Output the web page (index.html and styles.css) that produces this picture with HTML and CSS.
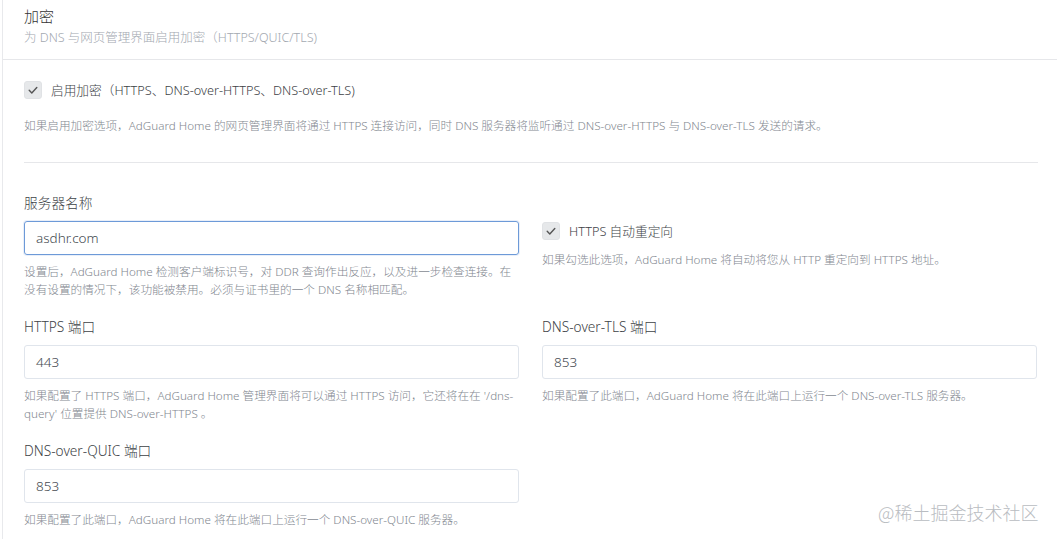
FILE: index.html
```html
<!DOCTYPE html>
<html lang="zh-CN">
<head>
<meta charset="utf-8">
<title>加密</title>
<link rel="stylesheet" href="styles.css">
</head>
<body>
<div class="page">
  <section class="card">
    <header class="card-header">
      <div class="card-title">加密</div>
      <div class="card-subtitle">为 DNS 与网页管理界面启用加密（HTTPS/QUIC/TLS)</div>
    </header>
    <div class="card-body">
      <label class="check">
        <span class="box"><svg viewBox="0 0 18 18" width="18" height="18"><path d="M5.2 9.3l2.6 2.6 5-5.4" fill="none" stroke="#555" stroke-width="1.4" stroke-linecap="round" stroke-linejoin="round"/></svg></span>
        <span class="check-label">启用加密（HTTPS、DNS-over-HTTPS、DNS-over-TLS)</span>
      </label>
      <p class="help help-top">如果启用加密选项，AdGuard Home 的网页管理界面将通过 HTTPS 连接访问，同时 DNS 服务器将监听通过 DNS-over-HTTPS 与 DNS-over-TLS 发送的请求。</p>
      <hr class="divider">
      <div class="grid">
        <div class="field">
          <div class="label">服务器名称</div>
          <div class="input focused">asdhr.com</div>
          <p class="help">设置后，AdGuard Home 检测客户端标识号，对 DDR 查询作出反应，以及进一步检查连接。在没有设置的情况下，该功能被禁用。必须与证书里的一个 DNS 名称相匹配。</p>
        </div>
        <div class="field field-check">
          <label class="check">
            <span class="box"><svg viewBox="0 0 18 18" width="18" height="18"><path d="M5.2 9.3l2.6 2.6 5-5.4" fill="none" stroke="#555" stroke-width="1.4" stroke-linecap="round" stroke-linejoin="round"/></svg></span>
            <span class="check-label">HTTPS 自动重定向</span>
          </label>
          <p class="help help-redirect">如果勾选此选项，AdGuard Home 将自动将您从 HTTP 重定向到 HTTPS 地址。</p>
        </div>
        <div class="field">
          <div class="label">HTTPS 端口</div>
          <div class="input">443</div>
          <p class="help">如果配置了 HTTPS 端口，AdGuard Home 管理界面将可以通过 HTTPS 访问，它还将在在 '/dns-query' 位置提供 DNS-over-HTTPS 。</p>
        </div>
        <div class="field">
          <div class="label">DNS-over-TLS 端口</div>
          <div class="input">853</div>
          <p class="help">如果配置了此端口，AdGuard Home 将在此端口上运行一个 DNS-over-TLS 服务器。</p>
        </div>
        <div class="field">
          <div class="label">DNS-over-QUIC 端口</div>
          <div class="input">853</div>
          <p class="help">如果配置了此端口，AdGuard Home 将在此端口上运行一个 DNS-over-QUIC 服务器。</p>
        </div>
      </div>
    </div>
  </section>
  <div class="watermark">@稀土掘金技术社区</div>
</div>
</body>
</html>
```

FILE: styles.css
```css
* { box-sizing: border-box; }
html, body {
  margin: 0;
  padding: 0;
  background: #fff;
  overflow: hidden;
}
body {
  font-family: "Noto Sans", "Noto Sans CJK SC", sans-serif;
  font-weight: 300;
  color: #495057;
  width: 1057px;
  height: 539px;
}
.page {
  position: relative;
  height: 539px;
  padding-left: 2px;
}
.card {
  width: 1057px;
  height: 560px;
  border-left: 1px solid #e8e9ec;
  background: #fff;
}
.card-header {
  padding: 6px 21px 12px;
  border-bottom: 1px solid #e6e7ea;
}
.card-title {
  font-size: 15px;
  line-height: 20px;
  color: #333;
}
.card-subtitle {
  margin-top: 3px;
  font-size: 12.5px;
  line-height: 18px;
  color: #a3a8b0;
}
.card-body {
  padding: 21px 21px 0;
}
.check {
  display: flex;
  align-items: center;
  height: 18px;
}
.box {
  width: 18px;
  height: 18px;
  border-radius: 3px;
  background: #e6e8ea;
  border: 1px solid #e0e2e5;
  display: flex;
  align-items: center;
  justify-content: center;
  flex: none;
}
.box svg { display: block; margin: -1px; }
.check-label {
  margin-left: 9px;
  font-size: 12.7px;
  color: #3d4246;
  line-height: 18px;
}
.help {
  margin: 8px 0 0;
  font-size: 11.65px;
  line-height: 18px;
  color: #82878f;
}
.help-top { margin-top: 18px; }
.divider {
  border: 0;
  border-top: 1px solid #e6e7ea;
  margin: 27px 0 0;
  width: 1014px;
}
.grid {
  display: grid;
  grid-template-columns: 495px 495px;
  column-gap: 23px;
  row-gap: 18px;
  margin-top: 30px;
}
.label {
  font-size: 13.7px;
  line-height: 20px;
  color: #3d4246;
}
.input {
  margin-top: 8px;
  height: 34px;
  border: 1px solid #e0e5ec;
  border-radius: 3px;
  padding: 0 11px;
  font-size: 13.5px;
  line-height: 32px;
  color: #444a50;
}
.input.focused {
  border-color: #6d9ad8;
  box-shadow: 0 0 0 1px rgba(70,127,207,0.12);
}
.field-check { padding-top: 29px; }
.help-redirect { margin-top: 11px; }
.watermark {
  position: absolute;
  left: 878px;
  top: 500px;
  font-size: 18px;
  line-height: 24px;
  color: #b9bcc1;
  font-family: "Noto Sans CJK SC", sans-serif;
}
```
